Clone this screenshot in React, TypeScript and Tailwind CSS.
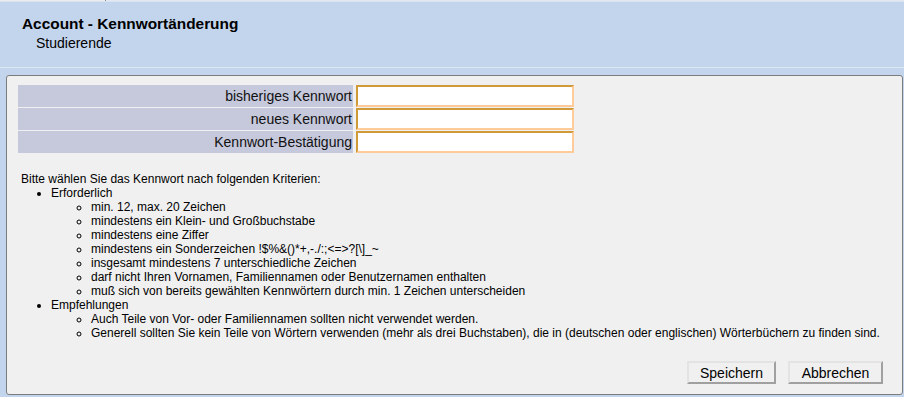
import React from 'react';

const fields = ['bisheriges Kennwort', 'neues Kennwort', 'Kennwort-Bestätigung'];

const required = [
  'min. 12, max. 20 Zeichen',
  'mindestens ein Klein- und Großbuchstabe',
  'mindestens eine Ziffer',
  'mindestens ein Sonderzeichen !$%&()*+,-./:;<=>?[\\]_~',
  'insgesamt mindestens 7 unterschiedliche Zeichen',
  'darf nicht Ihren Vornamen, Familiennamen oder Benutzernamen enthalten',
  'muß sich von bereits gewählten Kennwörtern durch min. 1 Zeichen unterscheiden',
];

const recommended = [
  'Auch Teile von Vor- oder Familiennamen sollten nicht verwendet werden.',
  'Generell sollten Sie kein Teile von Wörtern verwenden (mehr als drei Buchstaben), die in (deutschen oder englischen) Wörterbüchern zu finden sind.',
];

const btn =
  'h-[23px] bg-[#f0f0f0] border-2 border-t-[#e3e3e3] border-l-[#e3e3e3] border-r-[#a0a0a0] border-b-[#a0a0a0] text-[14px] leading-[18px] text-black';

export default function App() {
  return (
    <div className="w-full h-[397px] bg-[#c3d5ec] font-['Liberation_Sans',Arial,sans-serif] text-black flex flex-col overflow-hidden">
      {/* top strip */}
      <div className="flex h-px">
        <div className="w-[105px] bg-[#ececec]" />
        <div className="w-px bg-[#8c8c8c]" />
        <div className="flex-1 bg-[#e1e8f1]" />
      </div>

      {/* header */}
      <div className="h-[67px] border-t border-b border-t-[#d9e3f1] border-b-[#dfe7f2] pt-[13px] pl-[22px]">
        <div className="text-[15.4px] font-bold leading-[17px]">Account - Kennwortänderung</div>
        <div className="ml-[14px] mt-[3px] text-[14px] leading-[16px]">Studierende</div>
      </div>

      {/* panel */}
      <div className="mt-[7px] ml-[6px] mr-px h-[320px] border border-[#7c7c7c] rounded-[3px] bg-[#f0f0f0] flex flex-col pt-[9px] pl-[11px]">
        <div className="flex flex-col gap-px">
          {fields.map((f) => (
            <div key={f} className="flex items-center">
              <div className="w-[335px] h-[22px] bg-[#c6c8dc] text-right pr-px text-[14px] leading-[22px] text-[#111]">
                {f}
              </div>
              <input
                type="password"
                className="ml-[3px] w-[218px] h-[22px] bg-white border-2 border-t-[#d09a38] border-l-[#d09a38] border-r-[#ffcc99] border-b-[#ffcc99] outline-none"
              />
            </div>
          ))}
        </div>

        <div className="mt-[19px] pl-[3px] text-[12px] leading-[14px]">
          <div>Bitte wählen Sie das Kennwort nach folgenden Kriterien:</div>
          <ul className="list-disc pl-[30px]">
            <li>
              Erforderlich
              <ul className="list-[circle] pl-[40px]">
                {required.map((r) => (
                  <li key={r}>{r}</li>
                ))}
              </ul>
            </li>
            <li>
              Empfehlungen
              <ul className="list-[circle] pl-[40px]">
                {recommended.map((r) => (
                  <li key={r}>{r}</li>
                ))}
              </ul>
            </li>
          </ul>
        </div>

        <div className="mt-auto flex justify-end gap-[12px] pr-[19px] pb-[10px]">
          <button className={`${btn} w-[89px]`}>Speichern</button>
          <button className={`${btn} w-[95px]`}>Abbrechen</button>
        </div>
      </div>
    </div>
  );
}
